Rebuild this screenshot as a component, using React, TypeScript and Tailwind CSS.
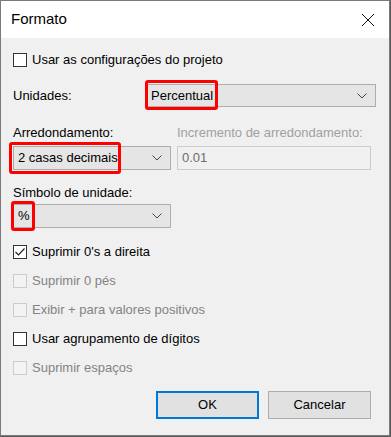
import React from "react";

const FONT = { fontFamily: '"Liberation Sans", Arial, sans-serif' };

function Chevron() {
  return (
    <svg width="10" height="6" viewBox="0 0 10 6" className="shrink-0">
      <path d="M0.5 0.5 L5 5 L9.5 0.5" fill="none" stroke="#444" strokeWidth="1" />
    </svg>
  );
}

function Select({ value, className }: { value: string; className: string }) {
  return (
    <div
      className={`flex items-center justify-between border border-[#adadad] bg-[#e5e5e5] pl-[4px] pr-[8px] text-[13px] text-black ${className}`}
    >
      <span>{value}</span>
      <Chevron />
    </div>
  );
}

function Check({
  label,
  checked = false,
  disabled = false,
}: {
  label: string;
  checked?: boolean;
  disabled?: boolean;
}) {
  return (
    <div className="flex h-[29px] items-start">
      <div
        className={`flex size-[14px] shrink-0 items-center justify-center border ${
          disabled ? "border-[#cccccc] bg-[#f3f3f3]" : "border-[#333333] bg-white"
        }`}
      >
        {checked && (
          <svg width="12" height="10" viewBox="0 0 12 10">
            <path d="M1.5 5 L4.5 8 L10.5 1.5" fill="none" stroke="#222" strokeWidth="1.2" />
          </svg>
        )}
      </div>
      <span
        className={`ml-[5px] -mt-[1px] text-[13px] leading-[16px] ${
          disabled ? "text-[#838383]" : "text-black"
        }`}
      >
        {label}
      </span>
    </div>
  );
}

function Highlight({ className }: { className: string }) {
  return (
    <div
      className={`pointer-events-none absolute rounded-[3px] border-[3px] border-[#ff0000] ${className}`}
    />
  );
}

export default function App() {
  return (
    <div className="h-[437px] w-[391px] bg-[#5a5a5a]" style={FONT}>
      <div className="flex h-[436px] w-[390px] flex-col border border-[#7a7a7a] bg-[#f0f0f0]">
        {/* title bar */}
        <div className="flex h-[37px] shrink-0 items-center justify-between bg-white pl-[10px] pr-[14px]">
          <span className="text-[15px] text-black">Formato</span>
          <svg width="14" height="14" viewBox="0 0 14 14">
            <path d="M1 1 L13 13 M13 1 L1 13" stroke="#111" strokeWidth="1" />
          </svg>
        </div>

        <div className="flex flex-col pl-[12px] pr-[13px]">
          <div className="mt-[15px]">
            <Check label="Usar as configurações do projeto" />
          </div>

          <div className="mt-[2px] flex items-center">
            <span className="w-[133px] text-[13px] text-black">Unidades:</span>
            <div className="relative flex-1">
              <Select value="Percentual" className="h-[23px]" />
              <Highlight className="-left-[1px] -top-[4px] h-[30px] w-[73px]" />
            </div>
          </div>

          <div className="mt-[18px] flex gap-[6px] text-[13px] leading-[16px]">
            <div className="flex w-[158px] flex-col">
              <span className="text-black">Arredondamento:</span>
              <div className="relative mt-[5px]">
                <Select value="2 casas decimais" className="h-[24px]" />
                <Highlight className="-left-[4px] -top-[4px] h-[32px] w-[112px]" />
              </div>
            </div>
            <div className="flex flex-1 flex-col">
              <span className="text-[#a0a0a0]">Incremento de arredondamento:</span>
              <div className="mr-[5px] mt-[5px] flex h-[24px] items-center border border-[#cccccc] bg-[#f0f0f0] pl-[4px] text-[#6d6d6d]">
                0.01
              </div>
            </div>
          </div>

          <span className="mt-[15px] text-[13px] leading-[16px] text-black">Símbolo de unidade:</span>
          <div className="relative mt-[3px] w-[158px]">
            <Select value="%" className="h-[24px]" />
            <Highlight className="-left-[2px] -top-[3px] h-[30px] w-[24px]" />
          </div>

          <div className="mt-[17px] flex flex-col">
            <Check label="Suprimir 0's a direita" checked />
            <Check label="Suprimir 0 pés" disabled />
            <Check label="Exibir + para valores positivos" disabled />
            <Check label="Usar agrupamento de dígitos" />
            <Check label="Suprimir espaços" disabled />
          </div>

          <div className="mt-[1px] flex justify-end gap-[9px] pr-[5px] text-[13px]">
            <button className="h-[28px] w-[103px] border-2 border-[#0078d7] bg-[#e1e1e1] text-black">
              OK
            </button>
            <button className="h-[28px] w-[103px] border border-[#adadad] bg-[#e1e1e1] text-black">
              Cancelar
            </button>
          </div>
        </div>
      </div>
    </div>
  );
}
